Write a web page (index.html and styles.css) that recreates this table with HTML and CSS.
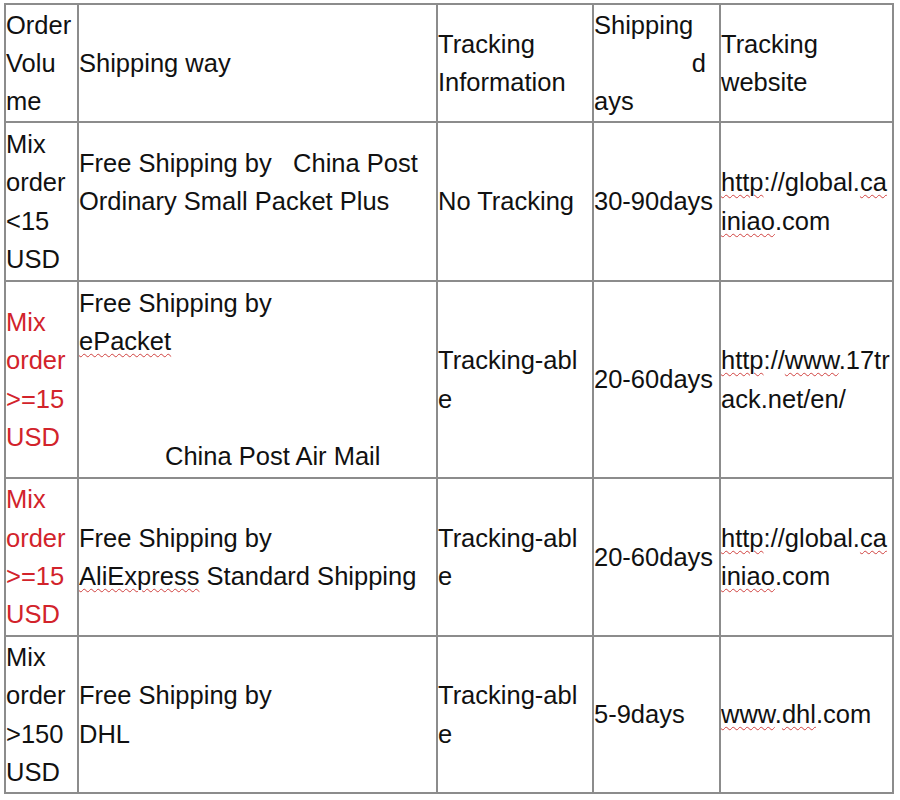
FILE: index.html
```html
<!DOCTYPE html>
<html>
<head>
<meta charset="utf-8">
<link rel="stylesheet" href="styles.css">
</head>
<body>
<table class="ship">
  <colgroup>
    <col class="c1"><col class="c2"><col class="c3"><col class="c4"><col class="c5">
  </colgroup>
  <tr class="r-head">
    <td>Order<br>Volu<br>me</td>
    <td>Shipping way</td>
    <td>Tracking<br>Information</td>
    <td>Shipping<br><span class="right-d">d</span><br>ays</td>
    <td>Tracking<br>website</td>
  </tr>
  <tr class="r-a">
    <td>Mix<br>order<br>&lt;15<br>USD</td>
    <td>Free Shipping by<span class="pre">   </span>China Post<br>Ordinary Small Packet Plus<br>&nbsp;</td>
    <td>No Tracking</td>
    <td>30-90days</td>
    <td><span class="sp">http</span>://global.<span class="sp">ca</span><br><span class="sp">iniao</span>.com</td>
  </tr>
  <tr class="r-b">
    <td class="red">Mix<br>order<br>&gt;=15<br>USD</td>
    <td>Free Shipping by<br><span class="sp">ePacket</span><br>&nbsp;<br>&nbsp;<br><span class="indent">China Post Air Mail</span></td>
    <td>Tracking-abl<br>e</td>
    <td>20-60days</td>
    <td><span class="sp">http</span>://<span class="sp">www</span>.17tr<br>ack.net/en/</td>
  </tr>
  <tr class="r-c">
    <td class="red">Mix<br>order<br>&gt;=15<br>USD</td>
    <td>Free Shipping by<br><span class="sp">AliExpress</span> Standard Shipping</td>
    <td>Tracking-abl<br>e</td>
    <td>20-60days</td>
    <td><span class="sp">http</span>://global.<span class="sp">ca</span><br><span class="sp">iniao</span>.com</td>
  </tr>
  <tr class="r-d">
    <td>Mix<br>order<br>&gt;150<br>USD</td>
    <td>Free Shipping by<br>DHL</td>
    <td>Tracking-abl<br>e</td>
    <td>5-9days</td>
    <td><span class="sp">www</span>.<span class="sp">dhl</span>.com</td>
  </tr>
</table>
</body>
</html>
```
FILE: styles.css
```css
html, body {
  margin: 0;
  padding: 0;
  background: #ffffff;
}

.ship {
  margin: 3px 0 0 4px;
  border-collapse: collapse;
  table-layout: fixed;
  width: 888px;
  font-family: "Liberation Sans", Arial, sans-serif;
  font-size: 25.5px;
  line-height: 38.3px;
  color: #111111;
}

.c1 { width: 73px; }
.c2 { width: 359px; }
.c3 { width: 156px; }
.c4 { width: 127px; }
.c5 { width: 173px; }

.ship td {
  border: 2px solid #8c8c8c;
  padding: 0;
  vertical-align: middle;
  white-space: nowrap;
  overflow: hidden;
}

.r-head { height: 118px; }
.r-a { height: 159px; }
.r-b { height: 197px; }
.r-c { height: 158px; }
.r-d { height: 157px; }

.red { color: #d2232b; }

.pre { white-space: pre; }

.right-d {
  display: inline-block;
  width: 112px;
  text-align: right;
}

.indent {
  padding-left: 86px;
}

.sp {
  text-decoration: underline wavy #d0413f;
  text-decoration-thickness: 1px;
  text-underline-offset: 3px;
}
```
